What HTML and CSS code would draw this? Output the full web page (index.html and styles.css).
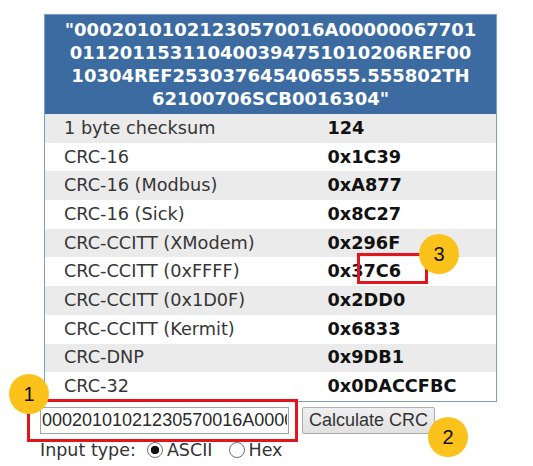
FILE: index.html
```html
<!DOCTYPE html>
<html lang="en">
<head>
    <meta charset="UTF-8">
    <title>CRC Calculator</title>
    <link rel="stylesheet" href="styles.css">
</head>
<body>
    <div class="calc">
        <table class="results">
            <colgroup>
                <col class="col-name">
                <col>
            </colgroup>
            <thead>
                <tr>
                    <th colspan="2">"00020101021230570016A00000067701<br>011201153110400394751010206REF00<br>10304REF253037645406555.555802TH<br>62100706SCB0016304"</th>
                </tr>
            </thead>
            <tbody>
                <tr><td>1 byte checksum</td><td class="value">124</td></tr>
                <tr><td>CRC-16</td><td class="value">0x1C39</td></tr>
                <tr><td>CRC-16 (Modbus)</td><td class="value">0xA877</td></tr>
                <tr><td>CRC-16 (Sick)</td><td class="value">0x8C27</td></tr>
                <tr><td>CRC-CCITT (XModem)</td><td class="value">0x296F</td></tr>
                <tr><td>CRC-CCITT (0xFFFF)</td><td class="value">0x37C6</td></tr>
                <tr><td>CRC-CCITT (0x1D0F)</td><td class="value">0x2DD0</td></tr>
                <tr><td>CRC-CCITT (Kermit)</td><td class="value">0x6833</td></tr>
                <tr><td>CRC-DNP</td><td class="value">0x9DB1</td></tr>
                <tr><td>CRC-32</td><td class="value">0x0DACCFBC</td></tr>
            </tbody>
        </table>

        <form class="crc-form">
            <div class="input-row">
                <input type="text" class="data-input" value="00020101021230570016A00000067701011201153110400394751010206REF0010304REF253037645406555.555802TH62100706SCB0016304">
                <button type="button" class="calc-btn">Calculate CRC</button>
            </div>
            <div class="type-row">
                Input type:
                <label class="opt"><input type="radio" name="type" checked> ASCII</label>
                <label class="opt"><input type="radio" name="type"> Hex</label>
            </div>
        </form>

        <!-- annotations -->
        <div class="mark mark-input"></div>
        <div class="mark mark-result"></div>
        <span class="badge badge-1">1</span>
        <span class="badge badge-2">2</span>
        <span class="badge badge-3">3</span>
    </div>
</body>
</html>
```

FILE: styles.css
```css
body {
    margin: 0;
    background: #ffffff;
    font-family: 'DejaVu Sans', Verdana, sans-serif;
    color: #333333;
    overflow: hidden;
}
.calc {
    position: relative;
    padding-top: 14px;
    height: 452px;
}
.results {
    margin-left: 44px;
    width: 453px;
    border-collapse: collapse;
    table-layout: fixed;
    border: 1px solid #7d9cc3;
}
.col-name {
    width: 283px;
}
.results th {
    background: #3b6ba0;
    color: #ffffff;
    font-size: 18px;
    font-weight: bold;
    line-height: 23px;
    padding: 3px 0 4px;
    text-align: center;
    white-space: nowrap;
}
.results td {
    height: 28.7px;
    padding: 0 0 0 19px;
    font-size: 17.7px;
    line-height: 21px;
    color: #363636;
    white-space: nowrap;
}
.results tbody tr:nth-child(odd) {
    background: #ebebeb;
}
.results td.value {
    padding-left: 0;
    font-weight: bold;
    color: #111111;
}
.crc-form {
    margin: 5px 0 0 40px;
}
.input-row {
    display: flex;
    align-items: center;
    gap: 13px;
}
.data-input {
    width: 249px;
    height: 27px;
    box-sizing: border-box;
    padding: 0 1px;
    border: 1px solid #a3a3a3;
    font-family: 'Liberation Sans', Arial, sans-serif;
    font-size: 18px;
    color: #2a2a2a;
    background: #ffffff;
}
.calc-btn {
    width: 133px;
    height: 27px;
    padding: 0;
    border: 1px solid #adadad;
    border-radius: 2px;
    background: linear-gradient(#f0f0f0, #e1e1e1);
    font-family: 'Liberation Sans', Arial, sans-serif;
    font-size: 18px;
    color: #333333;
}
.type-row {
    display: flex;
    align-items: center;
    margin-top: 6px;
    font-size: 17.5px;
    line-height: 21px;
    color: #333333;
}
.opt {
    display: flex;
    align-items: center;
    margin-left: 11px;
}
.opt + .opt {
    margin-left: 16px;
}
.opt input {
    appearance: none;
    width: 16px;
    height: 16px;
    margin: 0 4px 0 0;
    border: 1px solid #6f6f6f;
    border-radius: 50%;
    background: #ffffff;
}
.opt input:checked {
    background: radial-gradient(circle, #111111 0 4px, #ffffff 4.5px);
}
.mark {
    position: absolute;
    border: 3px solid #e3141b;
    box-sizing: border-box;
}
.mark-input {
    left: 27px;
    top: 399px;
    width: 271px;
    height: 43px;
}
.mark-result {
    left: 357px;
    top: 253px;
    width: 71px;
    height: 31px;
}
.badge {
    position: absolute;
    width: 40px;
    height: 40px;
    border-radius: 50%;
    background: #fbc21c;
    color: #111111;
    font-family: 'Liberation Sans', Arial, sans-serif;
    font-size: 20px;
    line-height: 40px;
    text-align: center;
}
.badge-1 {
    left: 9px;
    top: 374px;
}
.badge-2 {
    left: 428px;
    top: 417px;
}
.badge-3 {
    left: 419px;
    top: 234px;
}
```
